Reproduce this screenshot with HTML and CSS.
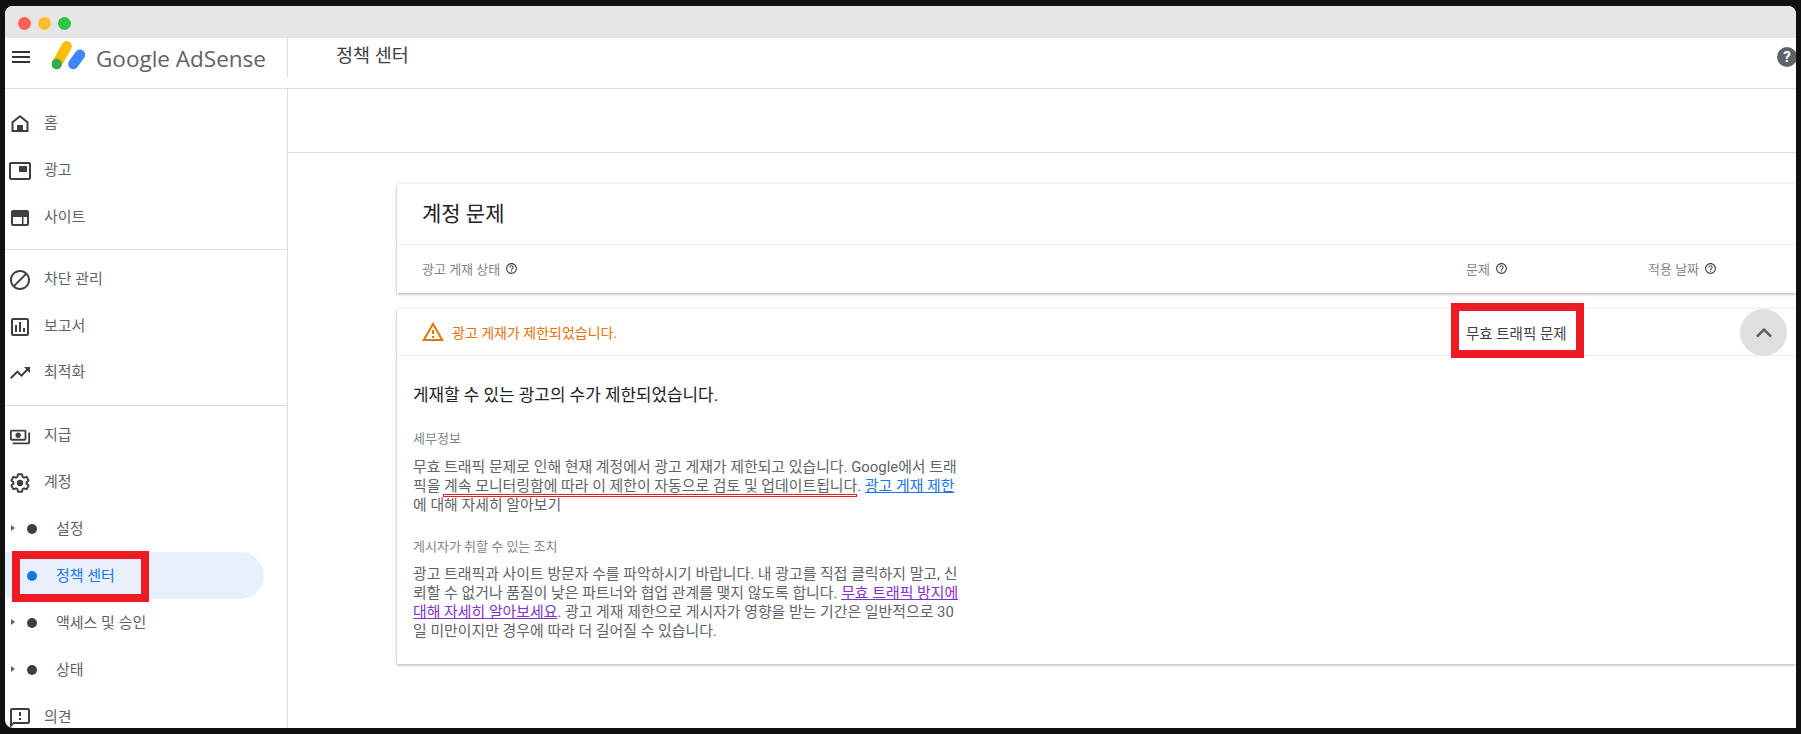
FILE: index.html
```html
<!DOCTYPE html>
<html lang="ko">

<head>
  <meta charset="UTF-8">
  <title>정책 센터 - Google AdSense</title>
  <link rel="stylesheet" href="styles.css">
</head>

<body>
  <div class="window">
    <div class="titlebar">
      <span class="light red"></span>
      <span class="light yellow"></span>
      <span class="light green"></span>
    </div>

    <header class="topbar">
      <div class="brand">
        <svg class="menu-icon" viewBox="0 0 24 24"><path d="M3 18h18v-2H3v2zm0-5h18v-2H3v2zm0-7v2h18V6H3z"/></svg>
        <svg class="logo" viewBox="0 0 34 30">
          <path class="logo-bar blue" d="M21.300 23 28 13.700"/>
          <path class="logo-bar yellow-bar" d="M4.700 23 14.700 5.300"/>
          <circle class="logo-dot" cx="4.700" cy="23" r="5.200"/>
        </svg>
        <span class="logo-text">Google AdSense</span>
      </div>
      <div class="page-title">정책 센터</div>
      <span class="help-badge">?</span>
    </header>

    <div class="main">
      <nav class="sidebar">
        <ul class="nav-group">
          <li class="nav-item"><svg class="nav-icon" viewBox="0 0 24 24"><path fill-rule="evenodd" d="M12 3 3.500 9.800V20h17V9.800L12 3zm0 2.600 6.500 5.200V18H15v-5H9v5H5.500v-7.200L12 5.600z"/><path d="M10 14h4v5h-4z"/></svg>홈</li>
          <li class="nav-item"><svg class="nav-icon" viewBox="0 0 24 24"><path d="M19 7h-8v6h8V7zm2-4H3C1.900 3 1 3.900 1 5v14c0 1.100.9 2 2 2h18c1.100 0 2-.9 2-2V5c0-1.100-.9-2-2-2zm0 16H3V5h18v14z"/></svg>광고</li>
          <li class="nav-item"><svg class="nav-icon" viewBox="0 0 24 24"><path d="M19 4H5c-1.100 0-2 .9-2 2v12c0 1.100.9 2 2 2h14c1.100 0 2-.9 2-2V6c0-1.100-.9-2-2-2zM5 18v-7h9v7H5zm14 0h-3.500v-7H19v7z"/></svg>사이트</li>
        </ul>
        <ul class="nav-group tools">
          <li class="nav-item"><svg class="nav-icon" viewBox="0 0 24 24"><path d="M12 2C6.480 2 2 6.480 2 12s4.480 10 10 10 10-4.480 10-10S17.520 2 12 2zM4 12c0-4.420 3.580-8 8-8 1.850 0 3.550.63 4.900 1.690L5.690 16.900C4.630 15.550 4 13.850 4 12zm8 8c-1.850 0-3.550-.63-4.900-1.690L18.310 7.100C19.370 8.450 20 10.150 20 12c0 4.420-3.580 8-8 8z"/></svg>차단 관리</li>
          <li class="nav-item"><svg class="nav-icon" viewBox="0 0 24 24"><path d="M19 3H5c-1.100 0-2 .9-2 2v14c0 1.100.9 2 2 2h14c1.100 0 2-.9 2-2V5c0-1.100-.9-2-2-2zm0 16H5V5h14v14zM7 10h2v7H7zm4-3h2v10h-2zm4 6h2v4h-2z"/></svg>보고서</li>
          <li class="nav-item"><svg class="nav-icon" viewBox="0 0 24 24"><path d="m16 6 2.290 2.290-4.880 4.880-4-4L2 16.590 3.410 18l6-6 4 4 6.300-6.290L22 12V6z"/></svg>최적화</li>
        </ul>
        <ul class="nav-group">
          <li class="nav-item"><svg class="nav-icon money" viewBox="0 0 24 24"><path d="M19 14V6c0-1.100-.9-2-2-2H3c-1.100 0-2 .9-2 2v8c0 1.100.9 2 2 2h14c1.100 0 2-.9 2-2zm-2 0H3V6h14v8zm-7-7c-1.660 0-3 1.340-3 3s1.340 3 3 3 3-1.340 3-3-1.340-3-3-3zm13 0v11c0 1.100-.9 2-2 2H4v-2h17V7h2z"/></svg>지급</li>
          <li class="nav-item"><svg class="nav-icon" viewBox="0 0 24 24"><path class="gear-line" d="M19.430 12.980c.04-.32.07-.64.07-.98s-.03-.66-.07-.98l2.110-1.650c.19-.15.24-.42.12-.64l-2-3.460c-.12-.22-.39-.3-.61-.22l-2.490 1c-.52-.4-1.080-.73-1.690-.98l-.38-2.650C14.460 2.180 14.250 2 14 2h-4c-.25 0-.46.18-.49.420l-.38 2.650c-.61.25-1.170.59-1.690.98l-2.490-1c-.23-.09-.49 0-.61.22l-2 3.460c-.13.22-.07.49.12.64l2.110 1.650c-.04.32-.07.65-.07.98s.03.66.07.98l-2.110 1.650c-.19.15-.24.42-.12.64l2 3.460c.12.22.39.3.61.22l2.490-1c.52.4 1.080.73 1.690.98l.38 2.650c.03.24.24.42.49.42h4c.25 0 .46-.18.49-.42l.38-2.650c.61-.25 1.170-.59 1.690-.98l2.490 1c.23.09.49 0 .61-.22l2-3.460c.12-.22.07-.49-.12-.64l-2.110-1.650z"/><circle cx="12" cy="12" r="3.200"/></svg>계정</li>
          <li class="nav-item sub has-caret"><span class="dot"></span>설정</li>
          <li class="nav-item sub active"><span class="dot"></span>정책 센터</li>
          <li class="nav-item sub has-caret"><span class="dot"></span>액세스 및 승인</li>
          <li class="nav-item sub has-caret"><span class="dot"></span>상태</li>
          <li class="nav-item"><svg class="nav-icon" viewBox="0 0 24 24"><path d="M20 2H4c-1.100 0-2 .9-2 2v18l4-4h14c1.100 0 2-.9 2-2V4c0-1.100-.9-2-2-2zm0 14H5.170L4 17.170V4h16v12zM11 12h2v2h-2zm0-6h2v4h-2z"/></svg>의견</li>
        </ul>
      </nav>

      <main class="content">
        <div class="subheader"></div>
        <div class="cards">
          <section class="card">
            <h1 class="card-title">계정 문제</h1>
            <div class="table-head">
              <span class="col-status">광고 게재 상태 <svg class="q-icon" viewBox="0 0 24 24"><path d="M11 18h2v-2h-2v2zm1-16C6.480 2 2 6.480 2 12s4.480 10 10 10 10-4.480 10-10S17.520 2 12 2zm0 18c-4.410 0-8-3.590-8-8s3.590-8 8-8 8 3.590 8 8-3.590 8-8 8zm0-14c-2.210 0-4 1.790-4 4h2c0-1.100.9-2 2-2s2 .9 2 2c0 2-3 1.750-3 5h2c0-2.250 3-2.500 3-5 0-2.210-1.790-4-4-4z"/></svg></span>
              <span class="col-issue">문제 <svg class="q-icon" viewBox="0 0 24 24"><path d="M11 18h2v-2h-2v2zm1-16C6.480 2 2 6.480 2 12s4.480 10 10 10 10-4.480 10-10S17.520 2 12 2zm0 18c-4.410 0-8-3.590-8-8s3.590-8 8-8 8 3.590 8 8-3.590 8-8 8zm0-14c-2.210 0-4 1.790-4 4h2c0-1.100.9-2 2-2s2 .9 2 2c0 2-3 1.750-3 5h2c0-2.250 3-2.500 3-5 0-2.210-1.790-4-4-4z"/></svg></span>
              <span class="col-date">적용 날짜 <svg class="q-icon" viewBox="0 0 24 24"><path d="M11 18h2v-2h-2v2zm1-16C6.480 2 2 6.480 2 12s4.480 10 10 10 10-4.480 10-10S17.520 2 12 2zm0 18c-4.410 0-8-3.590-8-8s3.590-8 8-8 8 3.590 8 8-3.590 8-8 8zm0-14c-2.210 0-4 1.790-4 4h2c0-1.100.9-2 2-2s2 .9 2 2c0 2-3 1.750-3 5h2c0-2.250 3-2.500 3-5 0-2.210-1.790-4-4-4z"/></svg></span>
            </div>
          </section>

          <section class="card">
            <div class="issue-row">
              <span class="col-status warn"><svg class="warn-icon" viewBox="0 0 24 24"><path d="M1 21h22L12 2 1 21zm3.470-2L12 5.990 19.530 19H4.470zM11 16h2v2h-2zm0-6h2v4h-2z"/></svg>광고 게재가 제한되었습니다.</span>
              <span class="col-issue issue-name">무효 트래픽 문제</span>
              <span class="collapse-btn"><svg viewBox="0 0 24 24"><path d="M7.410 15.410 12 10.830l4.590 4.580L18 14l-6-6-6 6z"/></svg></span>
            </div>
            <div class="issue-body">
              <h2 class="issue-heading">게재할 수 있는 광고의 수가 제한되었습니다.</h2>
              <h3 class="label">세부정보</h3>
              <p class="copy">무효 트래픽 문제로 인해 현재 계정에서 광고 게재가 제한되고 있습니다. Google에서 트래<br>픽을 계속 모니터링함에 따라 이 제한이 자동으로 검토 및 업데이트됩니다. <a class="link" href="#">광고 게재 제한</a><br>에 대해 자세히 알아보기</p>
              <h3 class="label second">게시자가 취할 수 있는 조치</h3>
              <p class="copy">광고 트래픽과 사이트 방문자 수를 파악하시기 바랍니다. 내 광고를 직접 클릭하지 말고, 신<br>뢰할 수 없거나 품질이 낮은 파트너와 협업 관계를 맺지 않도록 합니다. <a class="link visited" href="#">무효 트래픽 방지에<br>대해 자세히 알아보세요</a>. 광고 게재 제한으로 게시자가 영향을 받는 기간은 일반적으로 30<br>일 미만이지만 경우에 따라 더 길어질 수 있습니다.</p>
            </div>
          </section>
        </div>
      </main>
    </div>

    <!-- red marks drawn over the screenshot -->
    <div class="mark mark-nav"></div>
    <div class="mark mark-issue"></div>
    <div class="mark-line"></div>
  </div>
</body>

</html>
```

FILE: styles.css
```css
* {
  box-sizing: border-box;
}

body {
  margin: 0;
  padding: 6px 5px;
  height: 734px;
  background-color: #111;
  font-family: Roboto, "Noto Sans CJK KR", sans-serif;
  overflow: hidden;
}

ul {
  list-style: none;
  margin: 0;
  padding: 0;
}

.window {
  position: relative;
  display: flex;
  flex-direction: column;
  width: 1791px;
  height: 722px;
  background-color: white;
  border-radius: 8px 8px 0 8px;
  overflow: hidden;
}

/* mac title bar */
.titlebar {
  display: flex;
  align-items: center;
  gap: 7px;
  flex-shrink: 0;
  height: 32px;
  padding: 2px 0 0 13px;
  background-color: #e6e6e6;
}

.light {
  width: 13px;
  height: 13px;
  border-radius: 50%;
}

.red { background-color: #fe5f57; }
.yellow { background-color: #febc2e; }
.green { background-color: #28c840; }

/* top bar */
.topbar {
  display: flex;
  flex-shrink: 0;
  height: 51px;
  border-bottom: 1px solid #ddd;
}

.brand {
  display: flex;
  align-items: flex-start;
  width: 283px;
  height: 39px;
  border-right: 1px solid #ddd;
  padding-left: 4px;
}

.menu-icon {
  width: 24px;
  height: 24px;
  margin-top: 7px;
  fill: #333;
}

.logo {
  width: 34px;
  height: 30px;
  margin: 3px 0 0 19px;
}

.logo-bar {
  fill: none;
  stroke-width: 10.400;
  stroke-linecap: round;
}

.logo-bar.blue { stroke: #4285f4; }
.logo-bar.yellow-bar { stroke: #fbbc04; }
.logo-dot { fill: #34a853; }

.logo-text {
  margin: 6px 0 0 10px;
  font-family: "Open Sans", sans-serif;
  font-size: 22.500px;
  line-height: 30px;
  color: #5f6368;
  white-space: nowrap;
}

.page-title {
  padding: 6px 0 0 48px;
  font-size: 18.500px;
  line-height: 24px;
  color: #3c4043;
}

.help-badge {
  width: 20px;
  height: 20px;
  margin: 9px -1px 0 auto;
  border-radius: 50%;
  background-color: #5f6368;
  color: white;
  font-size: 15px;
  font-weight: 700;
  line-height: 20px;
  text-align: center;
}

.main {
  display: flex;
  flex: 1;
  min-height: 0;
}

/* sidebar */
.sidebar {
  flex-shrink: 0;
  width: 283px;
  padding-top: 10px;
  border-right: 1px solid #ddd;
}

.nav-group {
  padding-bottom: 9px;
  margin-bottom: 5px;
  border-bottom: 1px solid #ddd;
}

.nav-group.tools {
  padding-bottom: 10px;
}

.nav-group:last-child {
  border-bottom: none;
}

.nav-item {
  position: relative;
  display: flex;
  align-items: center;
  height: 46.900px;
  padding: 0 0 2px 39px;
  font-size: 15px;
  color: #5f6368;
}

.nav-icon {
  position: absolute;
  left: 3px;
  top: 13px;
  width: 24px;
  height: 24px;
  fill: #3c4043;
}

.nav-icon.money {
  left: 4px;
  top: 15px;
  width: 22px;
  height: 22px;
}

.gear-line {
  fill: none;
  stroke: #3c4043;
  stroke-width: 2.200;
  transform: scale(0.88);
  transform-origin: 12px 12px;
}

.nav-item.sub {
  padding-left: 51px;
}

.dot {
  position: absolute;
  left: 22px;
  top: 19px;
  width: 10px;
  height: 10px;
  border-radius: 50%;
  background-color: #3c4043;
}

.has-caret::before {
  content: "";
  position: absolute;
  left: 6px;
  top: 20px;
  border-left: 4px solid #5f6368;
  border-top: 3.500px solid transparent;
  border-bottom: 3.500px solid transparent;
}

.active {
  width: 259px;
  background-color: #e8f0fe;
  border-radius: 0 24px 24px 0;
  color: #1a73e8;
}

.active .dot {
  background-color: #1a73e8;
}

/* content */
.content {
  flex: 1;
  min-width: 0;
}

.subheader {
  height: 64px;
  border-bottom: 1px solid #ddd;
}

.cards {
  padding: 31px 0 0 109px;
}

.card {
  margin-bottom: 16px;
  background-color: white;
  box-shadow: 0 1px 3px rgba(60, 64, 67, 0.45);
}

.card-title {
  height: 61px;
  margin: 0;
  padding: 17px 0 0 25px;
  border-bottom: 1px solid #eee;
  font-size: 21px;
  font-weight: 400;
  line-height: 26px;
  color: #202124;
}

.table-head,
.issue-row {
  position: relative;
  display: flex;
  align-items: center;
  font-size: 13px;
  color: #80868b;
}

.table-head {
  height: 48px;
  padding-bottom: 2px;
}

.issue-row {
  height: 47px;
  border-bottom: 1px solid #eee;
}

.col-status {
  display: flex;
  align-items: center;
  gap: 5px;
  width: 1069px;
  padding-left: 25px;
}

.col-issue {
  display: flex;
  align-items: center;
  gap: 5px;
  width: 182px;
}

.col-date {
  display: flex;
  align-items: center;
  gap: 5px;
}

.q-icon {
  width: 13px;
  height: 13px;
  fill: #3c4043;
}

.warn {
  color: #e8710a;
  font-size: 14px;
  gap: 7px;
  padding-left: 24px;
}

.warn-icon {
  width: 24px;
  height: 24px;
  fill: #e8710a;
}

.issue-name {
  font-size: 14.500px;
  color: #3c4043;
}

.collapse-btn {
  position: absolute;
  top: 0;
  right: 9px;
  display: flex;
  align-items: center;
  justify-content: center;
  width: 47px;
  height: 47px;
  border-radius: 50%;
  background-color: #e0e0e0;
}

.collapse-btn svg {
  width: 32px;
  height: 32px;
  fill: #5f6368;
}

.issue-body {
  padding: 28px 0 23px 16px;
}

.issue-heading {
  margin: 0 0 25px;
  font-size: 16.900px;
  font-weight: 400;
  line-height: 22px;
  color: #202124;
}

.label {
  margin: 0 0 11px;
  font-size: 13px;
  font-weight: 400;
  line-height: 16px;
  color: #80868b;
}

.label.second {
  margin: 24px 0 10px;
}

.copy {
  margin: 0;
  font-size: 14.900px;
  line-height: 19px;
  color: #5f6368;
  white-space: nowrap;
}

.link {
  color: #1a73e8;
}

.link.visited {
  color: #8430ce;
}

/* red marks */
.mark {
  position: absolute;
  border: 8px solid #ed1c24;
}

.mark-nav {
  left: 7px;
  top: 545px;
  width: 137px;
  height: 51px;
}

.mark-issue {
  left: 1446px;
  top: 297px;
  width: 133px;
  height: 55px;
}

.mark-line {
  position: absolute;
  left: 438px;
  top: 488px;
  width: 414px;
  height: 3px;
  border: 1px solid #ed1c24;
  background-color: white;
}
```
